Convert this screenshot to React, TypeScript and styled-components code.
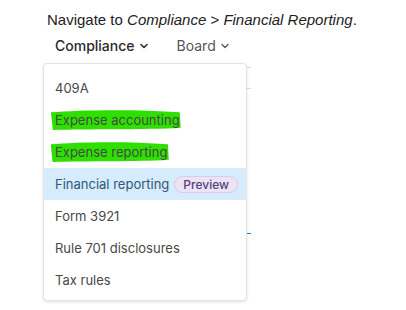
import React from "react";
import styled, { createGlobalStyle } from "styled-components";
import { ChevronDown } from "lucide-react";

const GlobalStyle = createGlobalStyle`
  body {
    margin: 0;
    background: #fff;
  }
`;

const items = [
  { label: "409A" },
  { label: "Expense accounting", marked: true },
  { label: "Expense reporting", marked: true },
  { label: "Financial reporting", active: true, badge: "Preview" },
  { label: "Form 3921" },
  { label: "Rule 701 disclosures" },
  { label: "Tax rules" },
];

export default function App() {
  return (
    <Page>
      <GlobalStyle />
      <Instruction>
        Navigate to <em>Compliance</em> &gt; <em>Financial Reporting</em>.
      </Instruction>
      <Nav>
        <NavItem $strong>
          Compliance <ChevronDown size={12} strokeWidth={3} />
        </NavItem>
        <NavItem>
          Board <ChevronDown size={12} strokeWidth={2.5} />
        </NavItem>
      </Nav>
      <Content>
        <Backdrop>
          <BackRow $h={4} />
          <BackRow $h={20} />
          <BackRow $h={144} $blue />
        </Backdrop>
        <Menu>
          {items.map((it) => (
            <Item key={it.label} $active={it.active}>
              <Label $active={it.active}>
                {it.marked && (
                  <Marker viewBox="0 0 140 20" preserveAspectRatio="none">
                    <path
                      d="M2 3 C30 1 90 0 136 3 L137 17 C100 19 40 18 4 19 Z"
                      fill="#2ee000"
                    />
                  </Marker>
                )}
                <span>{it.label}</span>
              </Label>
              {it.badge && <Badge>{it.badge}</Badge>}
            </Item>
          ))}
        </Menu>
      </Content>
    </Page>
  );
}

const Page = styled.div`
  width: 406px;
  height: 310px;
  padding: 11px 0 0 47px;
  box-sizing: border-box;
  overflow: hidden;
`;

const Instruction = styled.div`
  font-family: "Liberation Sans", Arial, sans-serif;
  font-size: 15px;
  line-height: 18px;
  color: #222;
`;

const Nav = styled.div`
  display: flex;
  gap: 27px;
  padding: 8px 0 0 8px;
  height: 26px;
  box-sizing: border-box;
`;

const NavItem = styled.div<{ $strong?: boolean }>`
  display: flex;
  align-items: center;
  gap: 3px;
  font-family: Inter, "Noto Sans", sans-serif;
  font-size: 14px;
  font-weight: ${(p) => (p.$strong ? 500 : 400)};
  color: ${(p) => (p.$strong ? "#2a2a2a" : "#555")};
  line-height: 18px;
`;

const Content = styled.div`
  position: relative;
  margin: 8px 0 0 -4px;
`;

const Backdrop = styled.div`
  width: 208px;
  display: flex;
  flex-direction: column;
`;

const BackRow = styled.div<{ $h: number; $blue?: boolean }>`
  height: ${(p) => p.$h}px;
  border-bottom: 1px solid ${(p) => (p.$blue ? "#1a82e2" : "#dcdcdc")};
`;

const Menu = styled.div`
  position: absolute;
  top: 0;
  left: 0;
  width: 204px;
  padding: 8px 0 4px;
  background: #fff;
  border: 1px solid #e4e4e4;
  border-radius: 4px;
  box-shadow: 0 1px 3px rgba(0, 0, 0, 0.12);
  box-sizing: border-box;
`;

const Item = styled.div<{ $active?: boolean }>`
  display: flex;
  align-items: center;
  gap: 5px;
  height: 32px;
  padding-left: 11px;
  background: ${(p) => (p.$active ? "#d6ebfb" : "transparent")};
`;

const Label = styled.span<{ $active?: boolean }>`
  position: relative;
  font-family: Inter, "Noto Sans", sans-serif;
  font-size: 13px;
  color: ${(p) => (p.$active ? "#2f5877" : "#484848")};

  span {
    position: relative;
  }
`;

const Marker = styled.svg`
  position: absolute;
  left: -6px;
  top: -3px;
  width: calc(100% + 10px);
  height: 22px;
`;

const Badge = styled.span`
  font-family: Inter, "Noto Sans", sans-serif;
  font-size: 12px;
  font-weight: 500;
  color: #5a3e82;
  background: #ece4f5;
  border: 1px solid #d9cbe9;
  border-radius: 9px;
  padding: 0 8px;
  line-height: 15px;
`;
